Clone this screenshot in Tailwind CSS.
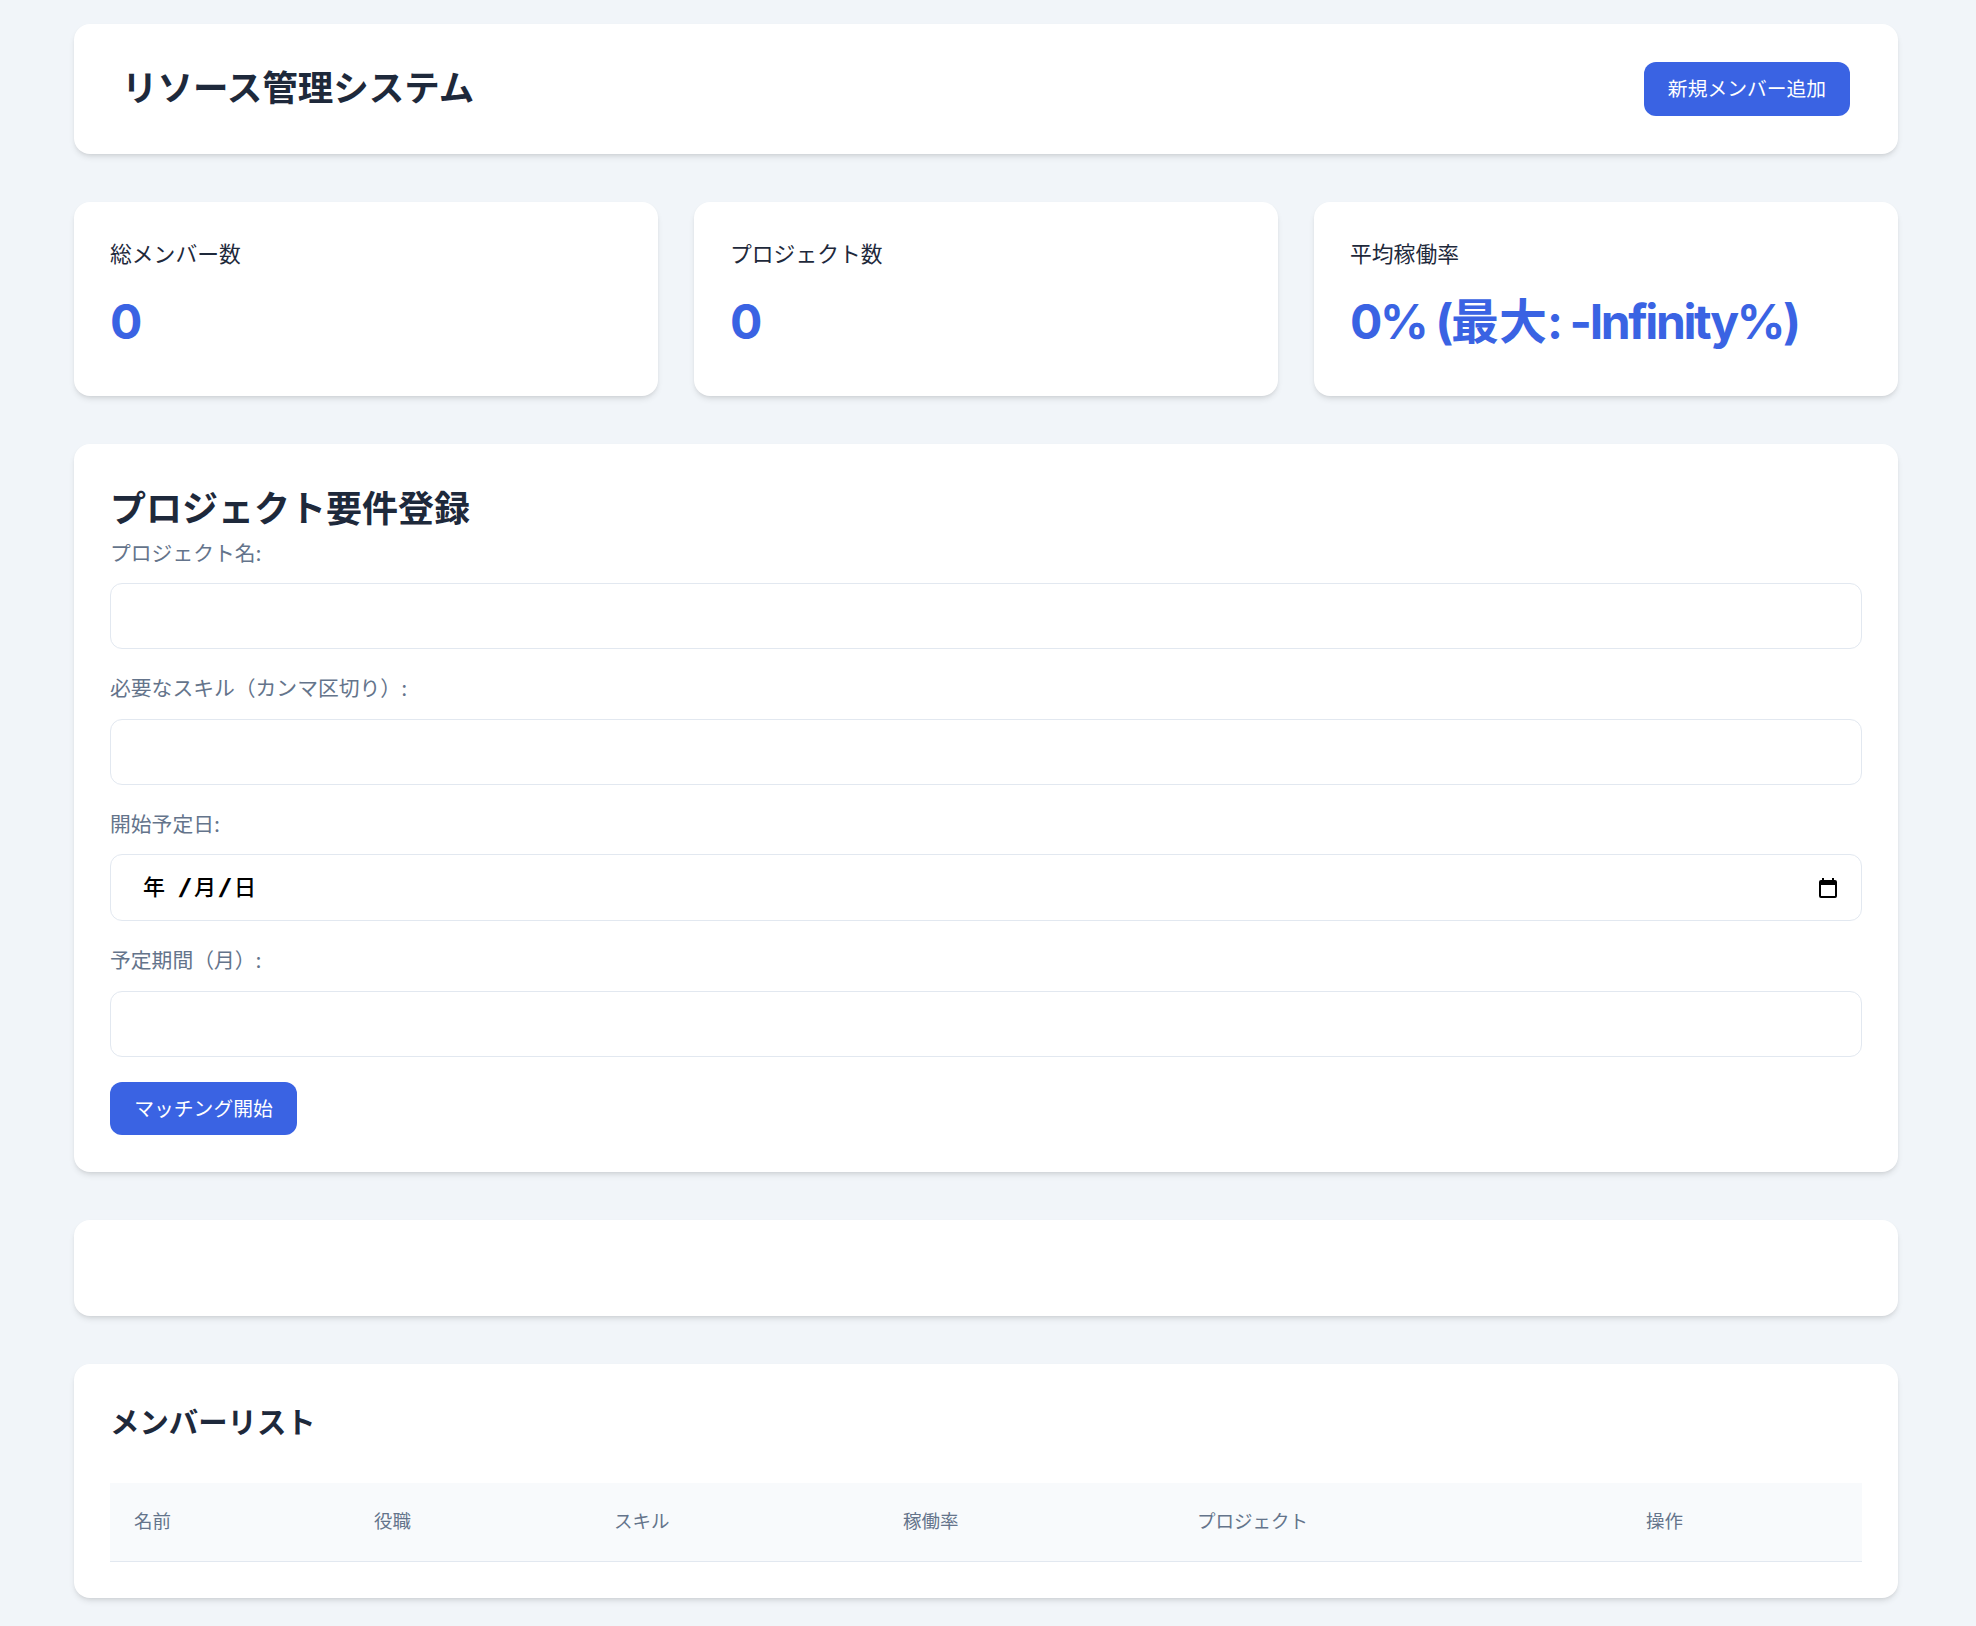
<!DOCTYPE html>
<html lang="ja">

<head>
    <meta charset="UTF-8" />
    <meta name="viewport" content="width=device-width, initial-scale=1.0" />
    <title>リソース管理システム</title>
    <script src="https://cdn.jsdelivr.net/npm/@tailwindcss/browser@4"></script>
</head>

<body class="bg-[#f1f5f9] text-[#1e293b] font-['Inter','Noto_Sans_CJK_JP',sans-serif]">

    <div class="w-[1824px] ml-[74px] pt-[24px] pb-[28px]">

        <!-- Header -->
        <header class="bg-white rounded-2xl shadow-md h-[130px] px-[48px] flex items-center justify-between mb-[48px]">
            <h1 class="text-[35.5px] leading-[54px] font-bold">リソース管理システム</h1>
            <button class="bg-[#3a63e3] text-white text-[19.8px] leading-[30px] w-[206px] h-[54px] rounded-xl">新規メンバー追加</button>
        </header>

        <!-- Stats -->
        <div class="grid grid-cols-3 gap-[36px] mb-[48px]">
            <div class="bg-white rounded-2xl shadow-md h-[194px] p-[36px]">
                <p class="text-[21.8px] leading-[32px] mb-[16px]">総メンバー数</p>
                <p class="text-[48px] leading-[72px] font-bold text-[#3a63e3] tracking-[-1px]">0</p>
            </div>
            <div class="bg-white rounded-2xl shadow-md h-[194px] p-[36px]">
                <p class="text-[21.8px] leading-[32px] mb-[16px]">プロジェクト数</p>
                <p class="text-[48px] leading-[72px] font-bold text-[#3a63e3] tracking-[-1px]">0</p>
            </div>
            <div class="bg-white rounded-2xl shadow-md h-[194px] p-[36px]">
                <p class="text-[21.8px] leading-[32px] mb-[16px]">平均稼働率</p>
                <p class="text-[48px] leading-[72px] font-bold text-[#3a63e3] tracking-[-2.4px]">0% (<span class="tracking-normal">最大</span>: -Infinity%)</p>
            </div>
        </div>

        <!-- Project form -->
        <section class="bg-white rounded-2xl shadow-md p-[36px] h-[728px] mb-[48px]">
            <h2 class="text-[36px] leading-[58px] font-bold">プロジェクト要件登録</h2>
            <form>
                <div class="mb-[24px]">
                    <label class="block text-[20.8px] leading-[32px] text-[#64748b] mb-[13px]">プロジェクト名:</label>
                    <input type="text" class="block w-full h-[66px] bg-white border border-[#e2e8f0] rounded-xl">
                </div>
                <div class="mb-[24px]">
                    <label class="block text-[20.8px] leading-[32px] text-[#64748b] mb-[14px]">必要なスキル（カンマ区切り）:</label>
                    <input type="text" class="block w-full h-[66px] bg-white border border-[#e2e8f0] rounded-xl">
                </div>
                <div class="mb-[24px]">
                    <label class="block text-[20.8px] leading-[32px] text-[#64748b] mb-[13px]">開始予定日:</label>
                    <div class="w-full h-[67px] bg-white border border-[#e2e8f0] rounded-xl flex items-center justify-between pl-[32px] pr-[21px] text-black text-[22px] font-medium">
                        <span class="flex items-center">
                            <span>年</span>
                            <span class="ml-[14px] mr-[3px] w-[12px] text-center font-normal scale-x-[1.8]">/</span>
                            <span>月</span>
                            <span class="mx-[3px] w-[12px] text-center font-normal scale-x-[1.8]">/</span>
                            <span>日</span>
                        </span>
                        <svg width="24" height="24" viewBox="0 0 24 24" fill="currentColor">
                            <path d="M19 4h-1V2h-2v2H8V2H6v2H5a2 2 0 0 0-2 2v14a2 2 0 0 0 2 2h14a2 2 0 0 0 2-2V6a2 2 0 0 0-2-2zm0 16H5V9h14v11z" />
                        </svg>
                    </div>
                </div>
                <div class="mb-[25px]">
                    <label class="block text-[20.8px] leading-[32px] text-[#64748b] mb-[14px]">予定期間（月）:</label>
                    <input type="number" class="block w-full h-[66px] bg-white border border-[#e2e8f0] rounded-xl">
                </div>
                <button type="button" class="bg-[#3a63e3] text-white text-[19.8px] leading-[30px] w-[187px] h-[53px] rounded-xl">マッチング開始</button>
            </form>
        </section>

        <!-- Matching result (empty) -->
        <section class="bg-white rounded-2xl shadow-md h-[96px] mb-[48px]"></section>

        <!-- Member list -->
        <section class="bg-white rounded-2xl shadow-md h-[234px] p-[36px]">
            <h2 class="text-[29.4px] leading-[46px] font-bold mb-[37px]">メンバーリスト</h2>
            <table class="w-full table-fixed">
                <thead>
                    <tr class="bg-[#f8fafc] border-b border-[#e2e8f0] h-[78px] text-left text-[18.5px] text-[#64748b]">
                        <th class="w-[240px] px-[24px] font-normal">名前</th>
                        <th class="w-[240px] px-[24px] font-normal">役職</th>
                        <th class="w-[289px] px-[24px] font-normal">スキル</th>
                        <th class="w-[294px] px-[24px] font-normal">稼働率</th>
                        <th class="w-[449px] px-[24px] font-normal">プロジェクト</th>
                        <th class="px-[24px] font-normal">操作</th>
                    </tr>
                </thead>
            </table>
        </section>

    </div>

</body>

</html>
